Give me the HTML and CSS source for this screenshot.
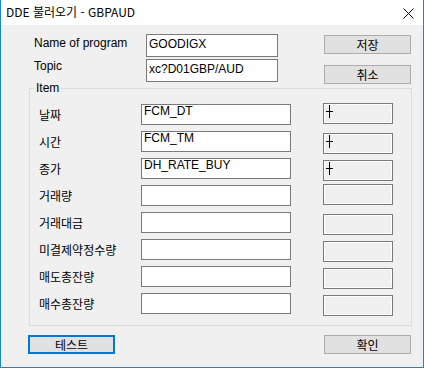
FILE: index.html
```html
<!DOCTYPE html>
<html lang="ko">
<head>
<meta charset="utf-8">
<title>DDE 불러오기 - GBPAUD</title>
<link rel="stylesheet" href="styles.css">
</head>
<body>
<div class="window">
  <div class="titlebar">
    <span class="title">DDE 불러오기 - GBPAUD</span>
    <svg class="close" width="11" height="11" viewBox="0 0 11 11"><path d="M0.5 0.5L10.5 10.5M10.5 0.5L0.5 10.5" stroke="#000" stroke-width="1"/></svg>
  </div>
  <div class="client">
    <div class="top">
      <div class="fields">
        <span class="lbl lbl-name">Name of program</span>
        <div class="input tall">GOODIGX</div>
        <span class="lbl lbl-topic">Topic</span>
        <div class="input tall">xc?D01GBP/AUD</div>
      </div>
      <div class="side-buttons">
        <button class="btn">저장</button>
        <button class="btn">취소</button>
      </div>
    </div>
    <fieldset class="group">
      <legend>Item</legend>
      <div class="rows">
        <div class="row"><span class="klbl">날짜</span><div class="input">FCM_DT</div><div class="box hi"><svg class="cur" width="10" height="15" viewBox="0 0 10 15"><path d="M5.5 1V14M2 7.5H9" stroke="#000"/></svg></div></div>
        <div class="row"><span class="klbl">시간</span><div class="input">FCM_TM</div><div class="box"><svg class="cur" width="10" height="15" viewBox="0 0 10 15"><path d="M5.5 1V14M2 7.5H9" stroke="#000"/></svg></div></div>
        <div class="row"><span class="klbl">종가</span><div class="input">DH_RATE_BUY</div><div class="box"><svg class="cur" width="10" height="15" viewBox="0 0 10 15"><path d="M5.5 1V14M2 7.5H9" stroke="#000"/></svg></div></div>
        <div class="row"><span class="klbl">거래량</span><div class="input"></div><div class="box hi"></div></div>
        <div class="row"><span class="klbl">거래대금</span><div class="input"></div><div class="box"></div></div>
        <div class="row"><span class="klbl">미결제약정수량</span><div class="input"></div><div class="box"></div></div>
        <div class="row"><span class="klbl">매도총잔량</span><div class="input"></div><div class="box"></div></div>
        <div class="row"><span class="klbl">매수총잔량</span><div class="input"></div><div class="box"></div></div>
      </div>
    </fieldset>
    <div class="bottom">
      <button class="btn focus">테스트</button>
      <button class="btn">확인</button>
    </div>
  </div>
</div>
</body>
</html>
```
FILE: styles.css
```css
* { box-sizing: border-box; }
html, body { margin: 0; padding: 0; background: #ffffff; }
body { font-family: "Liberation Sans", Arial, sans-serif; font-size: 12px; color: #000; }

.window {
  width: 424px;
  height: 368px;
  border: 1px solid #1883d7;
  border-top: 0;
  background: #f0f0f0;
  display: flex;
  flex-direction: column;
}

.titlebar {
  height: 25px;
  flex: none;
  background: #ffffff;
  display: flex;
  align-items: center;
  padding: 0 9px 0 5px;
}
.title {
  font-family: "Noto Sans CJK KR", "Liberation Sans", sans-serif;
  font-size: 12px;
  line-height: 16px;
  margin-top: -1px;
}
.close { margin-left: auto; display: block; margin-top: 1px; }

.client {
  flex: 1;
  padding: 9px 11px 0 28px;
}

.top { display: flex; }
.fields {
  margin-left: 5px;
  display: grid;
  grid-template-columns: 112px 132px;
  grid-template-rows: 23px 23px;
  row-gap: 2px;
}
.lbl { font-size: 12px; line-height: 14px; align-self: start; }
.lbl-name { padding-top: 2px; }
.lbl-topic { padding-top: 0; }

.input {
  background: #ffffff;
  border: 1px solid #7a7a7a;
  font-family: "Liberation Sans", Arial, sans-serif;
  font-size: 12px;
  line-height: 13px;
  padding: 0 0 0 2px;
  white-space: nowrap;
  overflow: hidden;
}
.input.tall { padding-top: 2px; line-height: 14px; }

.side-buttons {
  margin-left: auto;
  margin-right: 1px;
  display: flex;
  flex-direction: column;
  gap: 11px;
  padding-top: 1px;
}

.btn {
  width: 87px;
  height: 19px;
  padding: 0;
  margin: 0;
  background: #e1e1e1;
  border: 1px solid #adadad;
  font-family: "Noto Sans CJK KR", sans-serif;
  font-size: 12px;
  line-height: 15px;
  color: #000;
}
.btn.focus { border: 2px solid #0078d7; }

.group {
  margin: -2px 0 0 0;
  padding: 10px 18px 11px 9px;
  border: 1px solid #dcdcdc;
  min-width: 0;
}
.group legend {
  font-size: 12px;
  line-height: 12px;
  padding: 0 2px;
  margin-left: -5px;
}

.rows { display: flex; flex-direction: column; gap: 6px; }
.row { display: flex; align-items: center; height: 21px; }
.klbl {
  width: 102px;
  font-family: "Noto Sans CJK KR", sans-serif;
  font-size: 12px;
  line-height: 14px;
  margin-top: 1px;
}
.row .input { width: 150px; height: 21px; }
.box {
  width: 70px;
  height: 21px;
  margin-left: 32px;
  align-self: flex-start;
  margin-top: 2px;
  background: #f0f0f0;
  border: 1px solid #7a7a7a;
  box-shadow: inset 0 0 0 1px #ffffff;
  flex: none;
}
.box.hi { margin-top: -1px; }
.cur { display: block; }

.bottom {
  display: flex;
  justify-content: space-between;
  margin: 9px 1px 0 -1px;
}
```
